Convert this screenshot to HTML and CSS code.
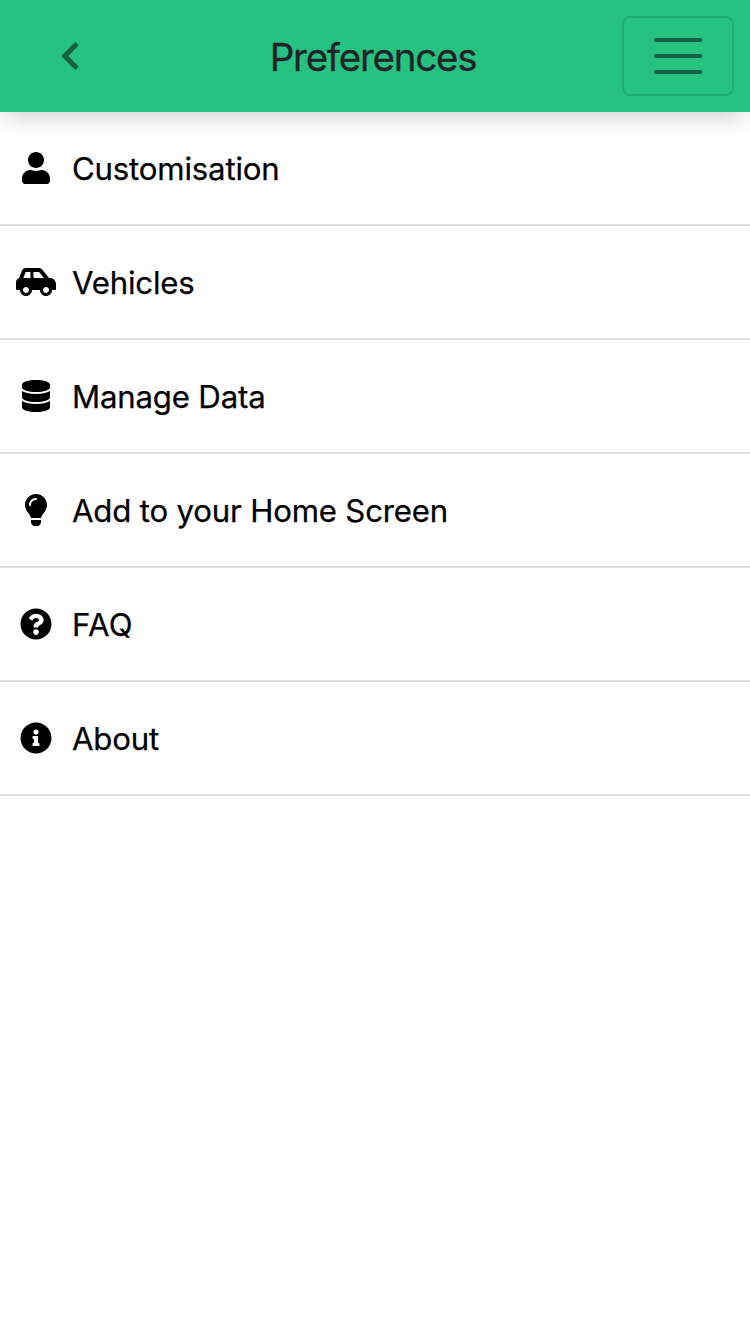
FILE: index.html
```html
<!DOCTYPE html>
<html lang="en">
<head>
<meta charset="utf-8">
<title>Preferences</title>
<link rel="stylesheet" href="styles.css">
</head>
<body>
<header class="navbar">
  <a class="back" aria-label="Back"><svg class="icon" viewBox="0 0 320 512"><path d="M34.52 239.03L228.87 44.69c9.37-9.37 24.57-9.37 33.94 0l22.67 22.67c9.36 9.36 9.37 24.52.04 33.9L131.49 256l154.02 154.75c9.34 9.38 9.32 24.54-.04 33.9l-22.67 22.67c-9.37 9.37-24.57 9.37-33.94 0L34.52 272.97c-9.37-9.37-9.37-24.57 0-33.94z"/></svg></a>
  <h1 class="title">Preferences</h1>
  <button class="toggler" aria-label="Menu"><span class="bar"></span><span class="bar"></span><span class="bar"></span></button>
</header>
<main class="list">
  <a class="item"><span class="item-icon"><svg class="icon" viewBox="0 0 448 512"><path d="M224 256c70.7 0 128-57.3 128-128S294.7 0 224 0 96 57.3 96 128s57.3 128 128 128zm89.6 32h-16.7c-22.2 10.2-46.9 16-72.9 16s-50.6-5.8-72.9-16h-16.7C60.2 288 0 348.2 0 422.4V464c0 26.5 21.5 48 48 48h352c26.5 0 48-21.5 48-48v-41.6c0-74.2-60.2-134.4-134.4-134.4z"/></svg></span><span class="label">Customisation</span></a>
  <a class="item"><span class="item-icon"><svg class="icon" viewBox="0 0 640 512"><path d="M544 192h-16L419.22 56.02A64.025 64.025 0 0 0 369.24 32H155.33c-26.17 0-49.7 15.93-59.42 40.23L48 194.26C20.44 201.4 0 226.21 0 256v112c0 8.84 7.16 16 16 16h48c0 53.02 42.98 96 96 96s96-42.98 96-96h128c0 53.02 42.98 96 96 96s96-42.98 96-96h48c8.84 0 16-7.16 16-16v-80c0-53.02-42.98-96-96-96zM160 432c-26.47 0-48-21.53-48-48s21.53-48 48-48 48 21.53 48 48-21.53 48-48 48zm72-240H116.93l38.4-96H232v96zm48 0V96h89.24l76.8 96H280zm200 240c-26.47 0-48-21.53-48-48s21.53-48 48-48 48 21.53 48 48-21.53 48-48 48z"/></svg></span><span class="label">Vehicles</span></a>
  <a class="item"><span class="item-icon"><svg class="icon" viewBox="0 0 448 512"><path d="M448 73.143v45.714C448 159.143 347.667 192 224 192S0 159.143 0 118.857V73.143C0 32.857 100.333 0 224 0s224 32.857 224 73.143zM448 176v102.857C448 319.143 347.667 352 224 352S0 319.143 0 278.857V176c48.125 33.143 136.208 48.572 224 48.572S399.874 209.143 448 176zm0 160v102.857C448 479.143 347.667 512 224 512S0 479.143 0 438.857V336c48.125 33.143 136.208 48.572 224 48.572S399.874 369.143 448 336z"/></svg></span><span class="label">Manage Data</span></a>
  <a class="item"><span class="item-icon"><svg class="icon" viewBox="0 0 352 512"><path d="M96.06 454.35c.01 6.29 1.87 12.45 5.36 17.69l17.09 25.69a31.99 31.99 0 0 0 26.64 14.28h61.71a31.99 31.99 0 0 0 26.64-14.28l17.09-25.69a31.989 31.989 0 0 0 5.36-17.69l.04-38.35H96.01l.05 38.35zM0 176c0 44.37 16.45 84.85 43.56 115.78 16.52 18.85 42.36 58.23 52.21 91.45.04.26.07.52.11.78h160.24c.04-.26.07-.51.11-.78 9.85-33.22 35.69-72.6 52.21-91.45C335.55 260.85 352 220.37 352 176 352 78.61 272.91-.3 175.45 0 73.44.31 0 82.97 0 176zm176-80c-44.11 0-80 35.89-80 80 0 8.84-7.16 16-16 16s-16-7.16-16-16c0-61.76 50.24-112 112-112 8.84 0 16 7.16 16 16s-7.16 16-16 16z"/></svg></span><span class="label">Add to your Home Screen</span></a>
  <a class="item"><span class="item-icon"><svg class="icon" viewBox="0 0 512 512"><path d="M504 256c0 136.997-111.043 248-248 248S8 392.997 8 256C8 119.083 119.043 8 256 8s248 111.083 248 248zM262.655 90c-54.497 0-89.255 22.957-116.549 63.758-3.536 5.286-2.353 12.415 2.715 16.258l34.699 26.31c5.205 3.947 12.621 3.008 16.665-2.122 17.864-22.658 30.113-35.797 57.303-35.797 20.429 0 45.698 13.148 45.698 32.958 0 14.976-12.363 22.667-32.534 33.976C247.128 238.528 216 254.941 216 296v4c0 6.627 5.373 12 12 12h56c6.627 0 12-5.373 12-12v-1.333c0-28.462 83.186-29.647 83.186-106.667 0-58.002-60.165-102-116.531-102zM256 338c-25.365 0-46 20.635-46 46 0 25.364 20.635 46 46 46s46-20.636 46-46c0-25.365-20.635-46-46-46z"/></svg></span><span class="label label-caps">FAQ</span></a>
  <a class="item"><span class="item-icon"><svg class="icon" viewBox="0 0 512 512"><path d="M256 8C119.043 8 8 119.083 8 256c0 136.997 111.043 248 248 248s248-111.003 248-248C504 119.083 392.957 8 256 8zm0 110c23.196 0 42 18.804 42 42s-18.804 42-42 42-42-18.804-42-42 18.804-42 42-42zm56 254c0 6.627-5.373 12-12 12h-88c-6.627 0-12-5.373-12-12v-24c0-6.627 5.373-12 12-12h12v-64h-12c-6.627 0-12-5.373-12-12v-24c0-6.627 5.373-12 12-12h64c6.627 0 12 5.373 12 12v100h12c6.627 0 12 5.373 12 12v24z"/></svg></span><span class="label">About</span></a>
</main>
</body>
</html>
```
FILE: styles.css
```css
* { box-sizing: border-box; }
body {
  margin: 0;
  background: #fff;
  color: #000;
  font-family: Inter, "Liberation Sans", sans-serif;
}
.icon { display: block; height: 32px; fill: currentColor; }
.navbar {
  display: grid;
  grid-template-columns: 108px 1fr 112px;
  align-items: center;
  height: 112px;
  padding: 0 16px;
  background: #26c281;
  box-shadow: 0 10px 24px -6px rgba(0, 0, 0, .2);
}
.back { display: flex; justify-content: center; color: rgba(0, 0, 0, .5); }
.title {
  margin: 0;
  padding-top: 2px;
  text-align: center;
  font-size: 38.5px;
  font-weight: 400;
  line-height: 48px;
  letter-spacing: -1.25px;
  color: #212529;
  -webkit-text-stroke: .3px;
}
.toggler {
  display: flex;
  flex-direction: column;
  align-items: center;
  justify-content: center;
  gap: 12px;
  width: 112px;
  height: 80px;
  padding: 0;
  border: 2px solid rgba(0, 0, 0, .1);
  border-radius: 8px;
  background: transparent;
}
.bar { width: 48px; height: 4px; border-radius: 2px; background: rgba(0, 0, 0, .5); }
.list { display: flex; flex-direction: column; }
.item {
  display: flex;
  align-items: center;
  gap: 16px;
  height: 114px;
  padding: 0 16px;
  border-bottom: 2px solid #dfdfdf;
}
.item-icon { display: flex; justify-content: center; width: 40px; }
.label {
  padding-top: 2px;
  font-size: 31.2px;
  line-height: 48px;
  letter-spacing: -.19px;
  white-space: nowrap;
  -webkit-text-stroke: .25px;
}
.label-caps { letter-spacing: .3px; }
```
